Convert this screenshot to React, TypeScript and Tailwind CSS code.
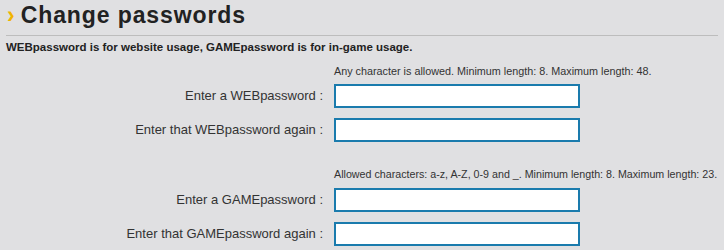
const webFields = ["Enter a WEBpassword :", "Enter that WEBpassword again :"];
const gameFields = ["Enter a GAMEpassword :", "Enter that GAMEpassword again :"];

function FieldRow({ label }: { label: string }) {
  return (
    <div className="flex items-center h-[24px]">
      <label className="w-[318px] text-right text-[13px] leading-[16px] text-[#333] pr-[1px]">{label}</label>
      <input
        type="password"
        className="ml-[10px] w-[246px] h-[24px] bg-white border-2 border-[#1a7bad] outline-none"
      />
    </div>
  );
}

export default function App() {
  return (
    <div className="min-h-[250px] bg-[#e0e0e2] px-[6px] font-['Liberation_Sans',Arial,sans-serif] text-[#333]">
      {/* Heading */}
      <div className="h-[36px] border-b border-[#bdbdbd] pt-[2px]">
        <h1 className="flex items-baseline text-[23px] leading-[26px] font-bold text-[#222]">
          <span className="text-[#f0b400] ml-[1px] mr-[6px]">›</span>
          <span className="tracking-[0.9px]">Change passwords</span>
        </h1>
      </div>

      <p className="mt-[5px] text-[11.5px] leading-[13px] font-bold text-[#222]">
        WEBpassword is for website usage, GAMEpassword is for in-game usage.
      </p>

      {/* Web password */}
      <p className="mt-[11px] pl-[328px] text-[10.8px] leading-[12px] text-[#333]">
        Any character is allowed. Minimum length: 8. Maximum length: 48.
      </p>
      <div className="mt-[7px] flex flex-col gap-[10px]">
        {webFields.map((f) => (
          <FieldRow key={f} label={f} />
        ))}
      </div>

      {/* Game password */}
      <p className="mt-[26px] pl-[328px] text-[10.7px] leading-[12px] text-[#333]">
        Allowed characters: a-z, A-Z, 0-9 and _. Minimum length: 8. Maximum length: 23.
      </p>
      <div className="mt-[8px] flex flex-col gap-[10px]">
        {gameFields.map((f) => (
          <FieldRow key={f} label={f} />
        ))}
      </div>
    </div>
  );
}
